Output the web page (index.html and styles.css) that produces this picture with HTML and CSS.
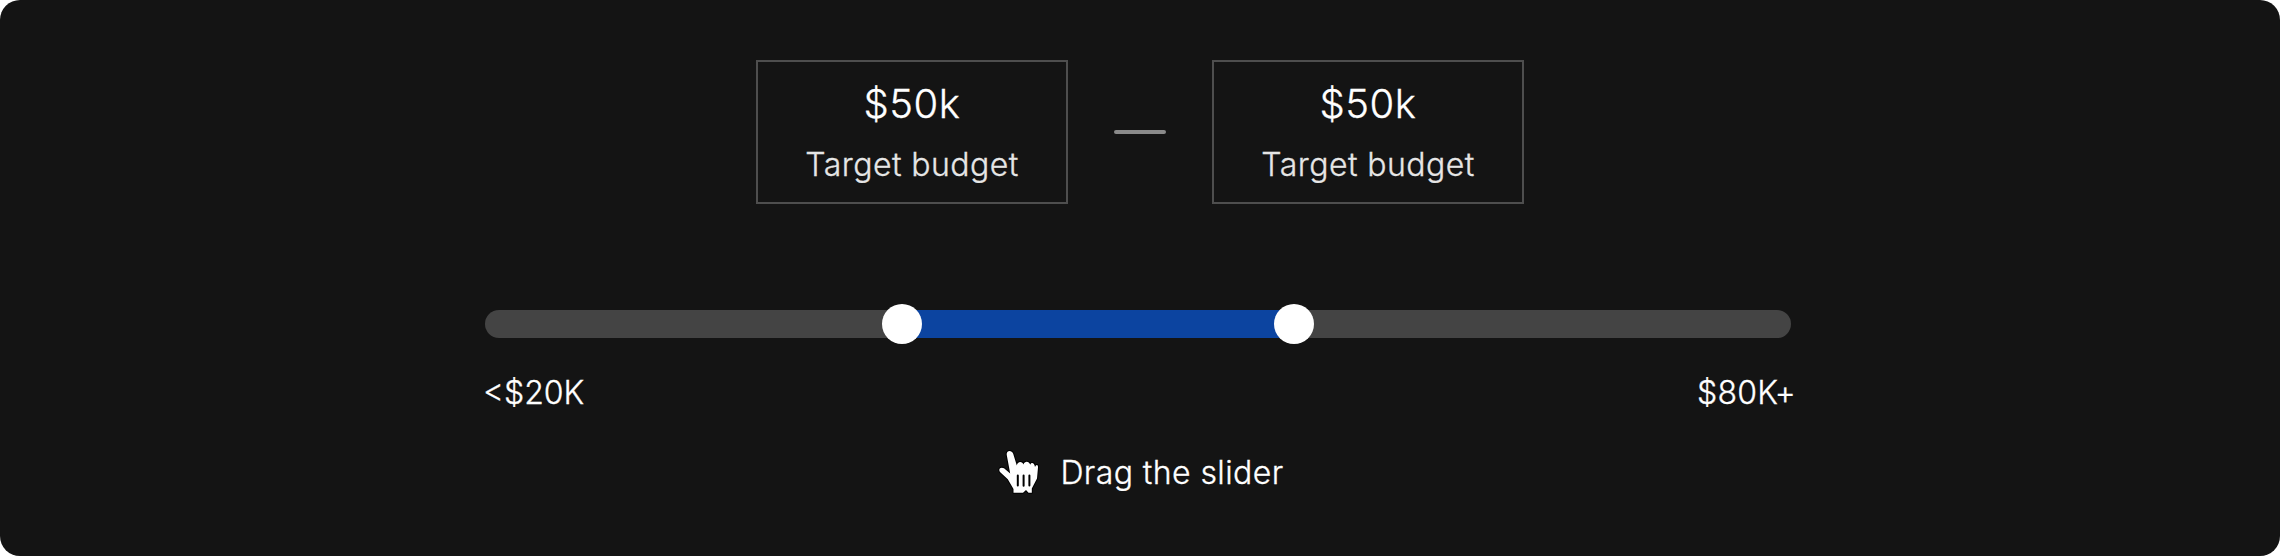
FILE: index.html
```html
<!DOCTYPE html>
<html lang="en">
<head>
<meta charset="utf-8">
<title>Target budget</title>
<link rel="stylesheet" href="styles.css">
</head>
<body>
<main class="panel">
  <section class="range">
    <div class="box"><span class="amount">$50k</span><span class="caption">Target budget</span></div>
    <span class="dash"></span>
    <div class="box"><span class="amount">$50k</span><span class="caption">Target budget</span></div>
  </section>
  <section class="slider">
    <div class="track">
      <span class="thumb"></span>
      <span class="fill"></span>
      <span class="thumb"></span>
    </div>
    <div class="labels"><span>&lt;$20K</span><span class="max">$80K+</span></div>
  </section>
  <section class="hint">
    <svg class="hand" viewBox="0 0 50 50" width="50" height="50">
      <path class="outline" d="M7.8 8.2C6.8 3.2 12.6 2.4 14.2 6.8L17.8 18.5C18.4 14 23.4 13.8 24.5 17.5C25.5 13.8 30.2 14 31.2 17.8C32 14.8 35.4 15.2 36 20C37 17.2 39.2 17 39 20.5L38 31.5L32.8 41.5V45.7H29.5L27 43L24 45.7H14.5V42L8.8 32.2L1 25C-1.2 21.5 2.2 19.6 5 21.3L11.2 26.5Z"/>
      <path class="creases" d="M18.8 28.5V38.5M24.6 28.5V38.7M30.4 28.5V38.5"/>
    </svg>
    <span>Drag the slider</span>
  </section>
</main>
</body>
</html>
```
FILE: styles.css
```css
* { box-sizing: border-box; }
body { margin: 0; background: #fff; font-family: Inter, "Liberation Sans", sans-serif; font-size: 32px; font-weight: 300; color: #fff; -webkit-text-stroke: 0.3px currentColor; }
.panel { height: 556px; padding-top: 60px; background: #141414; border-radius: 20px; display: flex; flex-direction: column; align-items: center; }
.range { display: flex; align-items: center; justify-content: center; }
.box { width: 312px; height: 144px; border: 2px solid #4e4e4e; padding-top: 14px; display: flex; flex-direction: column; align-items: center; gap: 10px; }
.amount { font-size: 40px; line-height: 56px; letter-spacing: 0.5px; }
.caption { line-height: 45px; color: #e6e6e6; letter-spacing: 0.43px; }
.dash { width: 52px; height: 4px; border-radius: 2px; background: #8a8a8a; margin: 0 46px; }
.slider { width: 1310px; margin-top: 106px; }
.track { width: 1306px; height: 28px; border-radius: 14px; background: #444; display: flex; align-items: center; padding-left: 397px; }
.thumb { width: 40px; height: 40px; border-radius: 50%; background: #fff; flex: none; z-index: 1; }
.fill { width: 392px; height: 28px; background: #0c44a0; margin: 0 -20px; }
.labels { display: flex; justify-content: space-between; line-height: 44px; margin: 33px -1px 0 -2px; }
.max { letter-spacing: 0.25px; }
.hint { display: flex; align-items: center; gap: 11px; height: 50px; margin-top: 32px; padding-left: 3px; letter-spacing: 0.41px; }
.hand { display: block; overflow: visible; }
.outline { fill: #fff; stroke: #000; stroke-width: 2; stroke-linejoin: round; paint-order: stroke; }
.creases { fill: none; stroke: #000; stroke-width: 2; stroke-linecap: round; }
```
